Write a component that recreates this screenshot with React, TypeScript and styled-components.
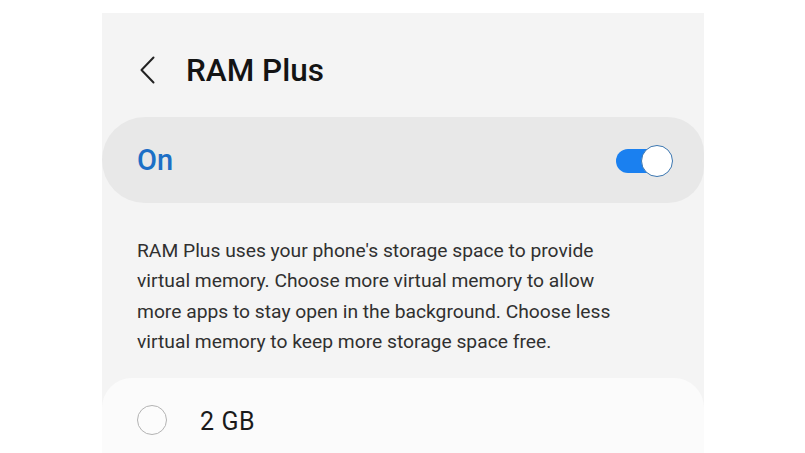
import React from "react";
import styled, { createGlobalStyle } from "styled-components";

const GlobalStyle = createGlobalStyle`
  html, body { margin: 0; padding: 0; background: #ffffff; }
  body { width: 805px; height: 453px; overflow: hidden; font-family: Roboto, "Noto Sans", sans-serif; }
`;

const Page = styled.div`
  width: 805px;
  height: 453px;
  box-sizing: border-box;
  padding: 13px 101px 0 102px;
  background: #ffffff;
`;

const Panel = styled.div`
  height: 440px;
  background: #f4f4f4;
  overflow: hidden;
  display: flex;
  flex-direction: column;
`;

const Header = styled.div`
  display: flex;
  align-items: center;
  height: 58px;
  margin-top: 28px;
  padding-left: 37px;
  gap: 29px;
`;

const BackButton = styled.button`
  border: none;
  background: none;
  padding: 0;
  width: 18px;
  height: 30px;
  display: flex;
  align-items: center;
  justify-content: flex-start;
  cursor: pointer;
`;

const Title = styled.h1`
  margin: 0;
  font-family: Roboto, sans-serif;
  font-weight: 500;
  font-size: 31.5px;
  color: #141414;
`;

const ToggleCard = styled.div`
  margin-top: 18px;
  height: 86px;
  border-radius: 43px 36px 36px 43px;
  background: #e8e8e8;
  display: flex;
  align-items: center;
  justify-content: space-between;
  padding: 0 33px 0 35px;
`;

const OnLabel = styled.span`
  font-family: Roboto, sans-serif;
  font-size: 29px;
  font-weight: 500;
  color: #1c6fc6;
`;

const Track = styled.div`
  position: relative;
  width: 55px;
  height: 24px;
  border-radius: 12px;
  background: #1a80f0;
  margin-top: 2px;
`;

const Thumb = styled.div`
  position: absolute;
  right: -2px;
  top: -4px;
  width: 32px;
  height: 32px;
  border-radius: 50%;
  background: #ffffff;
  border: 1.5px solid #3b76b0;
  box-sizing: border-box;
`;

const Description = styled.p`
  margin: 33px 0 0 0;
  padding: 0 0 0 35px;
  font-family: Roboto, sans-serif;
  font-size: 19.25px;
  line-height: 30.3px;
  color: #303030;
  white-space: nowrap;
`;

const OptionsCard = styled.div`
  margin-top: 21px;
  flex: 1;
  background: #fbfbfb;
  border-radius: 30px 30px 0 0;
  padding: 26px 0 0 35px;
`;

const OptionRow = styled.label`
  display: flex;
  align-items: center;
  gap: 33px;
  height: 32px;
`;

const Radio = styled.span`
  width: 30px;
  height: 30px;
  border-radius: 50%;
  border: 1.5px solid #b3b3b3;
  box-sizing: border-box;
  background: #fcfcfc;
`;

const OptionText = styled.span`
  font-family: Roboto, sans-serif;
  font-size: 25px;
  letter-spacing: 0.6px;
  color: #1a1a1a;
  margin-top: 2px;
`;

const lines = [
  "RAM Plus uses your phone's storage space to provide",
  "virtual memory. Choose more virtual memory to allow",
  "more apps to stay open in the background. Choose less",
  "virtual memory to keep more storage space free.",
];

export default function App() {
  return (
    <>
      <GlobalStyle />
      <Page>
        <Panel>
          <Header>
            <BackButton aria-label="Back">
              <svg width="16" height="28" viewBox="0 0 16 28" fill="none">
                <path d="M14.5 1.5 L2.5 14 L14.5 26.5" stroke="#222" strokeWidth="2" strokeLinecap="round" strokeLinejoin="round" />
              </svg>
            </BackButton>
            <Title>RAM Plus</Title>
          </Header>
          <ToggleCard>
            <OnLabel>On</OnLabel>
            <Track>
              <Thumb />
            </Track>
          </ToggleCard>
          <Description>
            {lines.map((l, i) => (
              <React.Fragment key={i}>
                {l}
                {i < lines.length - 1 && <br />}
              </React.Fragment>
            ))}
          </Description>
          <OptionsCard>
            <OptionRow>
              <Radio />
              <OptionText>2 GB</OptionText>
            </OptionRow>
          </OptionsCard>
        </Panel>
      </Page>
    </>
  );
}
